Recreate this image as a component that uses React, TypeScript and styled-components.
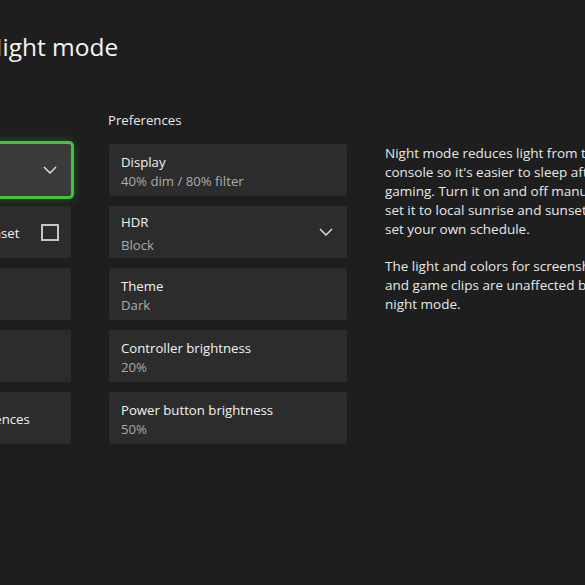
import * as React from "react";
import styled, { createGlobalStyle, css } from "styled-components";

const GlobalStyle = createGlobalStyle`
  html, body {
    margin: 0;
    padding: 0;
    background: #1e1e1e;
  }
  body {
    font-family: "Open Sans", "Noto Sans", sans-serif;
    color: #f2f2f2;
  }
`;

type TileItem = {
  title: string;
  value?: string;
  kind?: "plain" | "dropdown" | "checkbox";
  focused?: boolean;
};

const nightItems: Array<TileItem> = [
  { title: "Night mode", value: "Off", kind: "dropdown", focused: true },
  { title: "Use local sunrise and sunset", kind: "checkbox" },
  { title: "Start time" },
  { title: "End time" },
  { title: "Reset night mode preferences" },
];

const prefItems: Array<TileItem> = [
  { title: "Display", value: "40% dim / 80% filter" },
  { title: "HDR", value: "Block", kind: "dropdown" },
  { title: "Theme", value: "Dark" },
  { title: "Controller brightness", value: "20%" },
  { title: "Power button brightness", value: "50%" },
];

const Chevron = () => (
  <svg width="14" height="8" viewBox="0 0 14 8" fill="none">
    <path d="M1 1l6 6 6-6" stroke="#e6e6e6" strokeWidth="1.4" />
  </svg>
);

const Tile = ({ item }: { item: TileItem }) => {
  const kind = item.kind || "plain";
  return (
    <TileBox focused={item.focused}>
      <TileText spread={kind === "dropdown" && !!item.value}>
        <TileTitle>{item.title}</TileTitle>
        {item.value ? <TileValue>{item.value}</TileValue> : null}
      </TileText>
      {kind === "dropdown" ? (
        <IconSlot>
          <Chevron />
        </IconSlot>
      ) : null}
      {kind === "checkbox" ? <CheckBox /> : null}
    </TileBox>
  );
};

export default class App extends React.Component {
  render() {
    return (
      <Page>
        <GlobalStyle />
        <Title>Night mode</Title>
        <Columns>
          <Column>
            <Label>Night mode</Label>
            {nightItems.map((item, index) => (
              <Tile item={item} key={`night_${index}`} />
            ))}
          </Column>
          <Column>
            <Label>Preferences</Label>
            {prefItems.map((item, index) => (
              <Tile item={item} key={`pref_${index}`} />
            ))}
          </Column>
          <Description>
            <p>
              Night mode reduces light from the
              <br />
              console so it's easier to sleep after
              <br />
              gaming. Turn it on and off manually,
              <br />
              set it to local sunrise and sunset, or
              <br />
              set your own schedule.
            </p>
            <p>
              The light and colors for screenshots
              <br />
              and game clips are unaffected by
              <br />
              night mode.
            </p>
          </Description>
        </Columns>
      </Page>
    );
  }
}

const Page = styled.div`
  width: 585px;
  height: 585px;
  overflow: hidden;
  padding-top: 31px;
  box-sizing: border-box;
`;

const Title = styled.h1`
  margin: 0 0 0 -16px;
  font-size: 24.5px;
  font-weight: 400;
  line-height: 32px;
  color: #f4f4f4;
`;

const Columns = styled.div`
  display: flex;
  align-items: flex-start;
  gap: 38px;
  margin-left: -167px;
  margin-top: 47px;
`;

const Column = styled.div`
  width: 238px;
  flex: none;
  display: flex;
  flex-direction: column;
  gap: 10px;
`;

const Label = styled.div`
  font-size: 13.2px;
  line-height: 20px;
  color: #e8e8e8;
  margin-left: -1px;
  margin-bottom: 4px;
`;

const TileBox = styled.div<{ focused?: boolean }>`
  height: 52px;
  box-sizing: border-box;
  padding: 3px 12px 0;
  display: flex;
  align-items: center;
  background: #2c2c2c;
  border-radius: 2px;
  ${(p) =>
    p.focused &&
    css`
      background: #3b3b3b;
      box-shadow: 0 0 0 3px #44c43c, 0 0 8px 3px rgba(50, 190, 40, 0.4);
    `}
`;

const TileText = styled.div<{ spread?: boolean }>`
  flex: 1;
  min-width: 0;
  display: flex;
  flex-direction: column;
  gap: ${(p) => (p.spread ? "4px" : "0")};
  white-space: nowrap;
`;

const TileTitle = styled.div`
  font-size: 13.2px;
  line-height: 19px;
  color: #f2f2f2;
`;

const TileValue = styled.div`
  font-size: 13.2px;
  line-height: 19px;
  color: #ababab;
`;

const IconSlot = styled.div`
  flex: none;
  display: flex;
  align-items: center;
  margin-right: 2px;
  margin-top: -3px;
`;

const CheckBox = styled.div`
  flex: none;
  width: 18px;
  height: 17px;
  margin-top: -3px;
  box-sizing: border-box;
  border: 2px solid #c4c4c4;
`;

const Description = styled.div`
  flex: none;
  padding-top: 34px;
  font-size: 13.5px;
  line-height: 19px;
  color: #e8e8e8;
  white-space: nowrap;
  p {
    margin: 0 0 18px 0;
  }
`;
